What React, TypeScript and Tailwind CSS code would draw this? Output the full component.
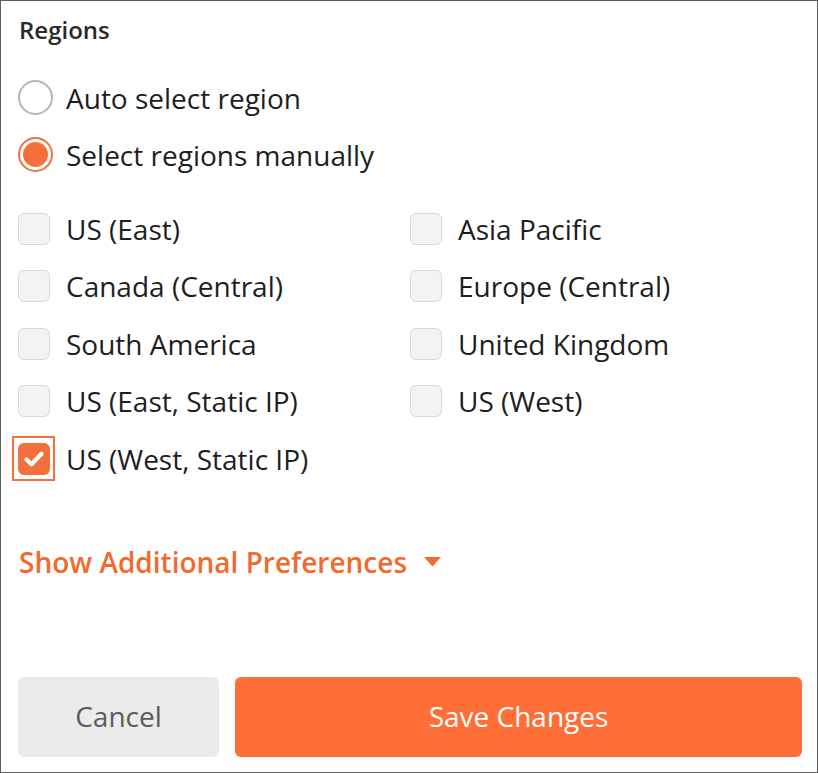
import React from "react";

const font = { fontFamily: '"Open Sans", "Noto Sans", sans-serif' };

function Radio({ checked, label }: { checked?: boolean; label: string }) {
  return (
    <div className="flex h-[57px] items-center">
      <div className="flex w-[48px] items-center">
        {checked ? (
          <div className="flex h-[35px] w-[35px] items-center justify-center rounded-full border-2 border-[#f3703c] bg-white">
            <div className="h-[25px] w-[25px] rounded-full bg-[#f3703c]" />
          </div>
        ) : (
          <div className="h-[35px] w-[35px] rounded-full border-2 border-[#b5b5b5] bg-white" />
        )}
      </div>
      <span className="text-[28px] leading-[38px] text-[#1e1e1e]">{label}</span>
    </div>
  );
}

function Check({ checked, label }: { checked?: boolean; label: string }) {
  return (
    <div className="flex h-[57.5px] items-center">
      <div className="flex w-[48px] items-center">
        {checked ? (
          <div className="-ml-[6px] flex h-[45px] w-[43px] items-center justify-center border-2 border-[#f3703c]">
            <div className="flex h-[32px] w-[32px] items-center justify-center rounded-[6px] bg-[#f3703c]">
              <svg width="22" height="18" viewBox="0 0 22 18">
                <polyline
                  points="3.5,9.5 8.5,14.2 18.5,3.8"
                  fill="none"
                  stroke="white"
                  strokeWidth="4.2"
                  strokeLinecap="round"
                  strokeLinejoin="round"
                />
              </svg>
            </div>
          </div>
        ) : (
          <div className="h-[32px] w-[32px] rounded-[6px] border-[1.5px] border-[#d9d9d9] bg-[#f3f3f3]" />
        )}
      </div>
      <span className="text-[28px] leading-[38px] text-[#1e1e1e]">{label}</span>
    </div>
  );
}

export default function App() {
  const left = ["US (East)", "Canada (Central)", "South America", "US (East, Static IP)"];
  const right = ["Asia Pacific", "Europe (Central)", "United Kingdom", "US (West)"];
  return (
    <div
      style={font}
      className="flex h-[773px] w-[818px] flex-col border border-[#5e5e5e] bg-white pl-[17px] pr-[15px]"
    >
      <div className="mt-[13px] h-[32px] pl-[1px] text-[24px] font-semibold leading-[32px] text-[#2a2a2a]">
        Regions
      </div>
      <div className="mt-[23px] flex flex-col">
        <Radio label="Auto select region" />
        <Radio checked label="Select regions manually" />
      </div>
      <div className="mt-[17px] grid grid-cols-[392px_1fr]">
        <div className="flex flex-col">
          {left.map((l) => (
            <Check key={l} label={l} />
          ))}
          <Check checked label="US (West, Static IP)" />
        </div>
        <div className="flex flex-col">
          {right.map((l) => (
            <Check key={l} label={l} />
          ))}
        </div>
      </div>
      <div className="mt-[55px] flex h-[38px] items-center pl-[1px]">
        <span className="text-[28px] font-semibold leading-[38px] text-[#f26a2e]">
          Show Additional Preferences
        </span>
        <svg className="ml-[17px] mt-[1px]" width="17" height="10" viewBox="0 0 17 10">
          <polygon points="0,0 17,0 8.5,9.5" fill="#f26a2e" />
        </svg>
      </div>
      <div className="mt-auto mb-[15px] flex gap-[16px]">
        <button className="h-[80px] w-[201px] rounded-[6px] bg-[#ebebeb] pb-[3px] text-[28px] text-[#5c5c5c]">
          Cancel
        </button>
        <button className="h-[80px] flex-1 rounded-[6px] bg-[#ff6e37] pb-[3px] text-[28px] text-white">
          Save Changes
        </button>
      </div>
    </div>
  );
}
